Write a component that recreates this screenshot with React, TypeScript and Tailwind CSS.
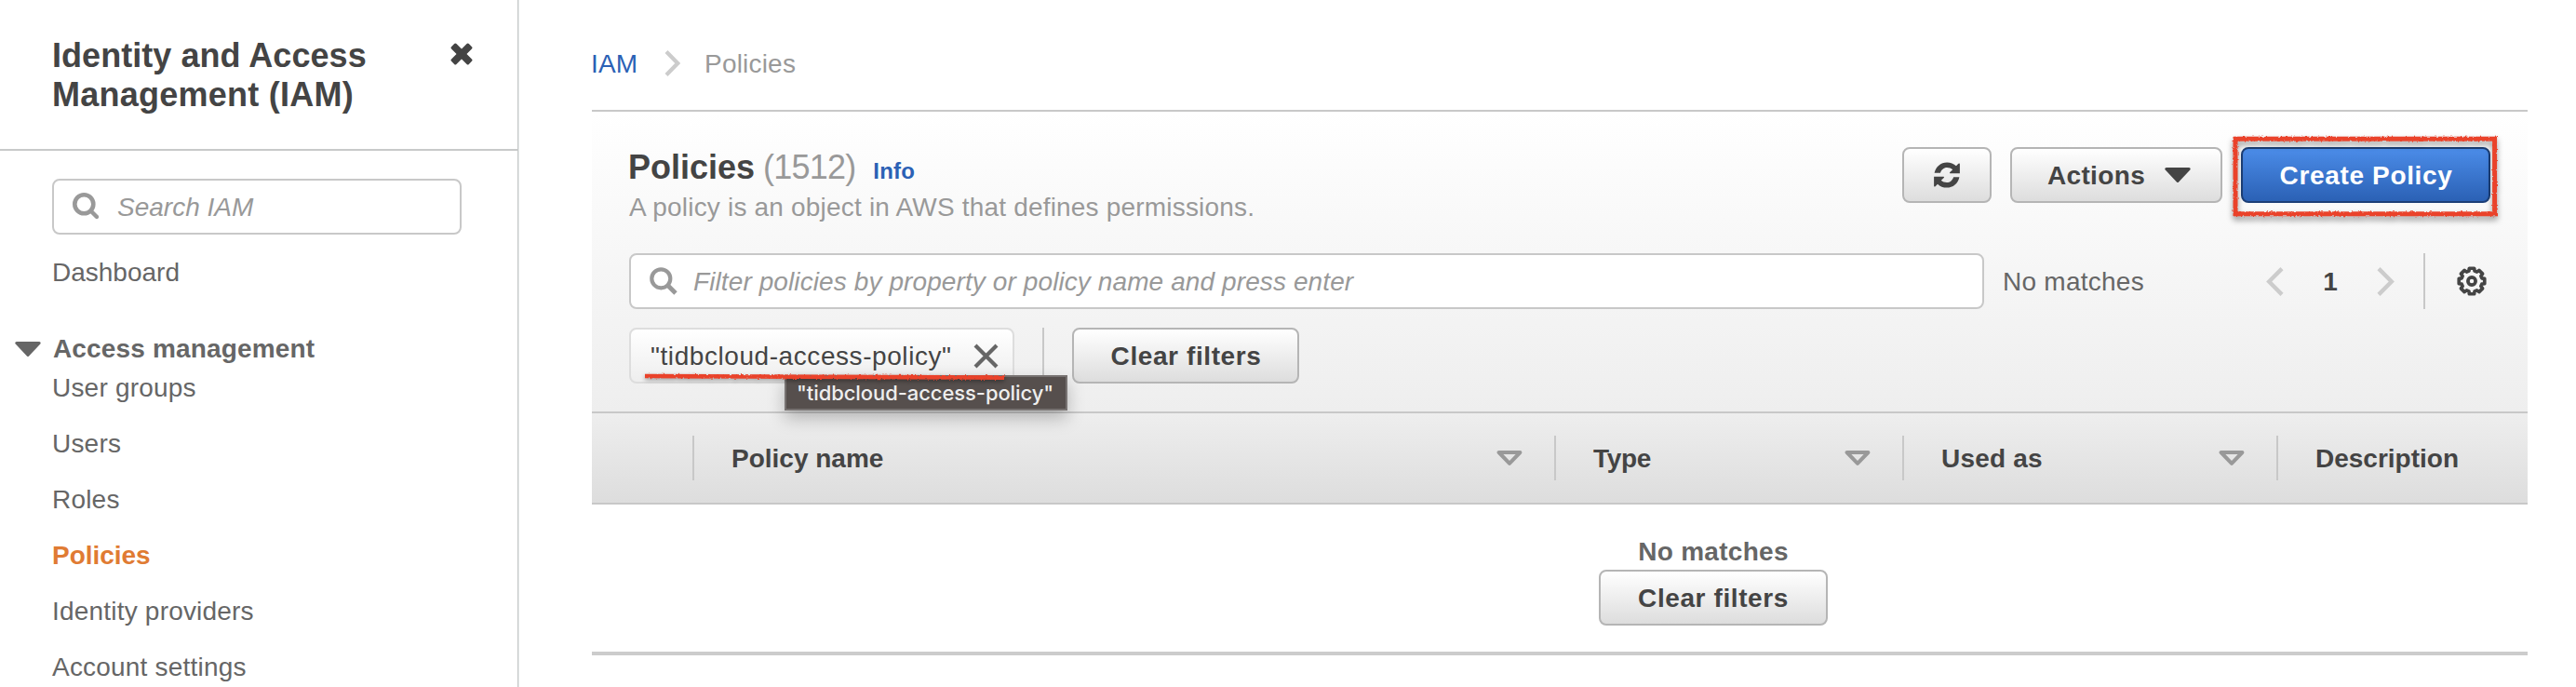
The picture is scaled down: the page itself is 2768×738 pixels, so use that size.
import React from "react";

const navItems = [
  { label: "User groups", active: false },
  { label: "Users", active: false },
  { label: "Roles", active: false },
  { label: "Policies", active: true },
  { label: "Identity providers", active: false },
  { label: "Account settings", active: false },
];

function CloseIcon() {
  return (
    <svg className="h-6 w-6 shrink-0" viewBox="0 0 24 24" fill="#444">
      <rect x="-1.300" y="8.200" width="26.600" height="7.600" rx="1.600" transform="rotate(45 12 12)" />
      <rect x="-1.300" y="8.200" width="26.600" height="7.600" rx="1.600" transform="rotate(-45 12 12)" />
    </svg>
  );
}

function SearchIcon({ rounded = false }: { rounded?: boolean }) {
  return (
    <svg className="h-[30px] w-[30px] shrink-0" viewBox="0 0 30 30" fill="none" stroke="#999">
      <circle cx="12.3" cy="12.3" r="10" strokeWidth={rounded ? 4.6 : 4.2} />
      <path
        d={rounded ? "M19.5 19.5 26 26" : "M19.5 19.5 28 28"}
        strokeWidth={rounded ? 4.4 : 4.8}
        strokeLinecap={rounded ? "round" : "butt"}
      />
    </svg>
  );
}

function CaretDown({ color, hollow = false }: { color: string; hollow?: boolean }) {
  return (
    <svg className="h-4 w-7 shrink-0" viewBox="0 0 28 16">
      <path
        d={hollow ? "M2.6 2H25.4L14 13.8Z" : "M1.8 1.5H26.2L14 14.4Z"}
        fill={hollow ? "none" : color}
        stroke={color}
        strokeWidth={hollow ? 4 : 3}
        strokeLinejoin="round"
      />
    </svg>
  );
}

function RefreshIcon() {
  const half =
    "M.6 12C2 5 7.6.4 14.3.4c3.9 0 7.4 1.5 10 4L26.8 1.9Q28.3.8 28.3 2.6V12.5H17.8Q16.6 12.3 17.5 11.1L20.5 8.3C18.8 6.8 16.7 6 14.3 6 10.8 6 8 8.6 7 12Z";
  return (
    <svg className="h-[28px] w-[28px]" viewBox="0 0 28.4 28.4" fill="#444">
      <path d={half} />
      <path d={half} transform="rotate(180 14.2 14.2)" />
    </svg>
  );
}

function ChevronIcon({ left = false }: { left?: boolean }) {
  return (
    <svg className="h-[31px] w-[19px] shrink-0" viewBox="0 0 19 31" fill="none" stroke="#ccc" strokeWidth="4.4">
      <path d={left ? "M17 1.6 3.2 15.5 17 29.4" : "M2 1.6 15.8 15.5 2 29.4"} />
    </svg>
  );
}

function GearIcon() {
  const points: string[] = [];
  for (let i = 0; i < 8; i++) {
    for (const [offset, radius] of [[-11, 14], [11, 14], [16, 11.3], [29, 11.3]]) {
      const angle = ((i * 45 + offset) * Math.PI) / 180;
      points.push(`${(16 + radius * Math.cos(angle)).toFixed(2)},${(16 + radius * Math.sin(angle)).toFixed(2)}`);
    }
  }
  return (
    <svg className="h-8 w-8 shrink-0" viewBox="0 0 32 32" fill="none" stroke="#444" strokeWidth="3.7">
      <polygon points={points.join(" ")} strokeLinejoin="round" />
      <circle cx="16" cy="16" r="4.1" />
    </svg>
  );
}

function Button({ children, className = "" }: { children: React.ReactNode; className?: string }) {
  return (
    <button
      className={`flex h-[60px] shrink-0 items-center justify-center rounded-[8px] border-2 border-[#b5b5b5] bg-linear-to-b from-white to-[#dddddd] font-bold text-[#444] ${className}`}
    >
      {children}
    </button>
  );
}

function HeaderCell({ label, className, sortable = true }: { label: string; className: string; sortable?: boolean }) {
  return (
    <div className={`flex h-12 shrink-0 items-center justify-between pl-10 ${sortable ? "border-r-2 border-[#c8c8c8] pr-[34px]" : ""} ${className}`}>
      <span className="pt-0.5">{label}</span>
      {sortable && <CaretDown color="#999" hollow />}
    </div>
  );
}

export default function App() {
  return (
    <div className="flex h-[738px] w-[2768px] overflow-hidden bg-white font-['Liberation_Sans',Arial,sans-serif] text-[28px] leading-[42px] whitespace-nowrap text-[#666]">
      <aside className="h-full w-[557px] shrink-0 border-r border-[#c6c9c9] shadow-[1px_0_0_#e6e9e9]">
        <div className="flex h-[162px] justify-between border-b-2 border-[#c8caca] pt-[39px] pr-12 pl-14">
          <h1 className="text-[36px] leading-[42px] font-bold text-[#444]">
            <span className="tracking-[0.05px]">Identity and Access</span>
            <br />
            <span className="tracking-[0.25px]">Management (IAM)</span>
          </h1>
          <div className="pt-[7px]">
            <CloseIcon />
          </div>
        </div>
        <div className="mt-[30px] ml-14 flex h-[60px] w-[440px] items-center rounded-[8px] border-2 border-[#c8c8c8] pl-5">
          <SearchIcon rounded />
          <span className="pt-0.5 pl-[18px] text-[#999] italic">Search IAM</span>
        </div>
        <div className="mt-5 pl-14">Dashboard</div>
        <div className="mt-10 flex items-center pl-4">
          <CaretDown color="#666" />
          <span className="pl-[13px] font-bold tracking-[0.15px]">Access management</span>
        </div>
        <nav className="flex flex-col gap-[18px] pl-14 tracking-[0.2px]">
          {navItems.map((item) => (
            <a key={item.label} className={item.active ? "font-bold tracking-[-0.05px] text-[#e07b33]" : ""}>
              {item.label}
            </a>
          ))}
        </nav>
      </aside>

      <main className="w-[2159px] shrink-0 pl-[79px]">
        <div className="flex h-[118px] items-start pt-12">
          <span className="-ml-px w-[52px] tracking-[0.2px] text-[#2b61b5]">IAM</span>
          <svg className="mt-1.5 ml-[27px] h-7 w-[17px]" viewBox="0 0 17 28" fill="none" stroke="#ccc" strokeWidth="4.2">
            <path d="M2 1.5 14.2 14 2 26.5" />
          </svg>
          <span className="pl-[26px] tracking-[0.2px] text-[#999]">Policies</span>
        </div>

        <section className="h-[326px] border-y-2 border-[#c8c8c8] bg-linear-to-b from-white to-[#eeeeee] pt-[38px]">
          <div className="flex h-[114px] justify-between pr-10 pl-10">
            <div className="pt-px">
              <div className="-ml-px flex h-[43px] items-baseline">
                <h2 className="text-[36px] font-bold text-[#444]">Policies</h2>
                <span className="pl-[9px] text-[36px] tracking-[-0.8px] text-[#999]">(1512)</span>
                <a className="pl-[19px] text-[24px] font-bold tracking-[0.2px] text-[#2b61b5]">Info</a>
              </div>
              <p className="tracking-[0.19px] text-[#999]">A policy is an object in AWS that defines permissions.</p>
            </div>
            <div className="flex gap-5">
              <Button className="w-24">
                <RefreshIcon />
              </Button>
              <Button className="w-[228px]">
                <span className="pt-0.5 pr-[21px] pl-[6px] tracking-[0.35px]">Actions</span>
                <CaretDown color="#444" />
              </Button>
              <div className="relative h-[60px]">
                <button className="flex h-[60px] w-[268px] items-center justify-center rounded-[8px] border-2 border-[#1c3f77] bg-linear-to-b from-[#4b8ce8] to-[#2b61b5] font-bold tracking-[0.65px] text-white">
                  <span className="pt-0.5 pl-px">Create Policy</span>
                </button>
                <svg className="absolute -top-4 -left-3.5 h-[100px] w-[296px] drop-shadow-[0_4px_3px_rgba(0,0,0,0.4)]" viewBox="0 0 296 100" fill="none">
                  <filter id="rough-frame" filterUnits="userSpaceOnUse" x="0" y="0" width="296" height="100">
                    <feTurbulence type="fractalNoise" baseFrequency="0.45" numOctaves="2" seed="4" />
                    <feDisplacementMap in="SourceGraphic" scale="3" xChannelSelector="R" yChannelSelector="G" />
                  </filter>
                  <rect x="8" y="7.2" width="278.6" height="80.6" stroke="#ea432b" strokeWidth="5" filter="url(#rough-frame)" />
                </svg>
              </div>
            </div>
          </div>

          <div className="flex items-center pl-10">
            <div className="flex h-[60px] w-[1456px] items-center rounded-[8px] border-2 border-[#c8c8c8] bg-white pl-5">
              <SearchIcon />
              <span className="pt-0.5 pl-[17px] tracking-[0.1px] text-[#999] italic">
                Filter policies by property or policy name and press enter
              </span>
            </div>
            <span className="w-[303px] pt-0.5 pl-5 tracking-[0.25px]">No matches</span>
            <ChevronIcon left />
            <span className="w-[100px] pt-0.5 text-center font-bold text-[#444]">1</span>
            <ChevronIcon />
            <div className="ml-[31px] h-[60px] w-0.5 bg-[#c8c8c8]" />
            <div className="pl-[34px]">
              <GearIcon />
            </div>
          </div>

          <div className="relative mt-5 flex items-center pl-10">
            <div className="flex h-[60px] w-[414px] items-center justify-between rounded-[8px] border-2 border-[#dddddd] bg-linear-to-b from-white to-[#eeeeee] pr-[15px] pl-[21px] text-[#444]">
              <span className="pt-0.5 tracking-[0.57px]">"tidbcloud-access-policy"</span>
              <svg className="h-[27px] w-[27px]" viewBox="0 0 27 27" fill="none" stroke="#666" strokeWidth="4.2">
                <path d="M2 2 25 25M25 2 2 25" />
              </svg>
            </div>
            <div className="ml-[30px] h-[60px] w-0.5 bg-[#c8c8c8]" />
            <Button className="ml-[30px] w-[244px] tracking-[0.6px]">
              <span className="pt-0.5 pl-px">Clear filters</span>
            </Button>
            <div className="absolute top-[51px] left-[207px] flex h-[38px] w-[304px] items-center border-2 border-[#777271] bg-[#564f4d] pl-[11px] font-[Inter,sans-serif] text-[22px] leading-[26px] font-medium tracking-[-0.08px] text-[#eeeeee] shadow-[0_8px_18px_rgba(0,0,0,0.25)]">
              "tidbcloud-access-policy"
            </div>
            <svg className="absolute top-[43px] left-[53px] h-5 w-[396px] drop-shadow-[0_2px_2px_rgba(0,0,0,0.35)]" viewBox="0 0 396 20" fill="none">
              <filter id="rough-line" filterUnits="userSpaceOnUse" x="0" y="0" width="396" height="20">
                <feTurbulence type="fractalNoise" baseFrequency="0.4" numOctaves="2" seed="7" />
                <feDisplacementMap in="SourceGraphic" scale="3" xChannelSelector="R" yChannelSelector="G" />
              </filter>
              <path d="M4 9 391 10.6" stroke="#ea432b" strokeWidth="4.6" filter="url(#rough-line)" />
            </svg>
          </div>
        </section>

        <div className="flex h-[98px] items-center overflow-hidden border-b-2 border-[#c8c8c8] bg-linear-to-b from-[#eeeeee] to-[#dddddd] font-bold text-[#444]">
          <div className="h-12 w-[110px] shrink-0 border-r-2 border-[#c8c8c8]" />
          <HeaderCell label="Policy name" className="w-[926px]" />
          <HeaderCell label="Type" className="w-[374px] tracking-[-0.3px]" />
          <HeaderCell label="Used as" className="w-[402px] tracking-[0.2px]" />
          <HeaderCell label="Description" className="w-[268px]" sortable={false} />
        </div>

        <div className="h-[162px] overflow-hidden border-b-4 border-[#cccccc] pt-[30px]">
          <div className="flex w-[2410px] flex-col items-center">
            <span className="h-10 font-bold tracking-[0.3px]">No matches</span>
            <Button className="w-[246px] tracking-[0.6px]">
              <span className="pt-0.5">Clear filters</span>
            </Button>
          </div>
        </div>
      </main>
    </div>
  );
}
